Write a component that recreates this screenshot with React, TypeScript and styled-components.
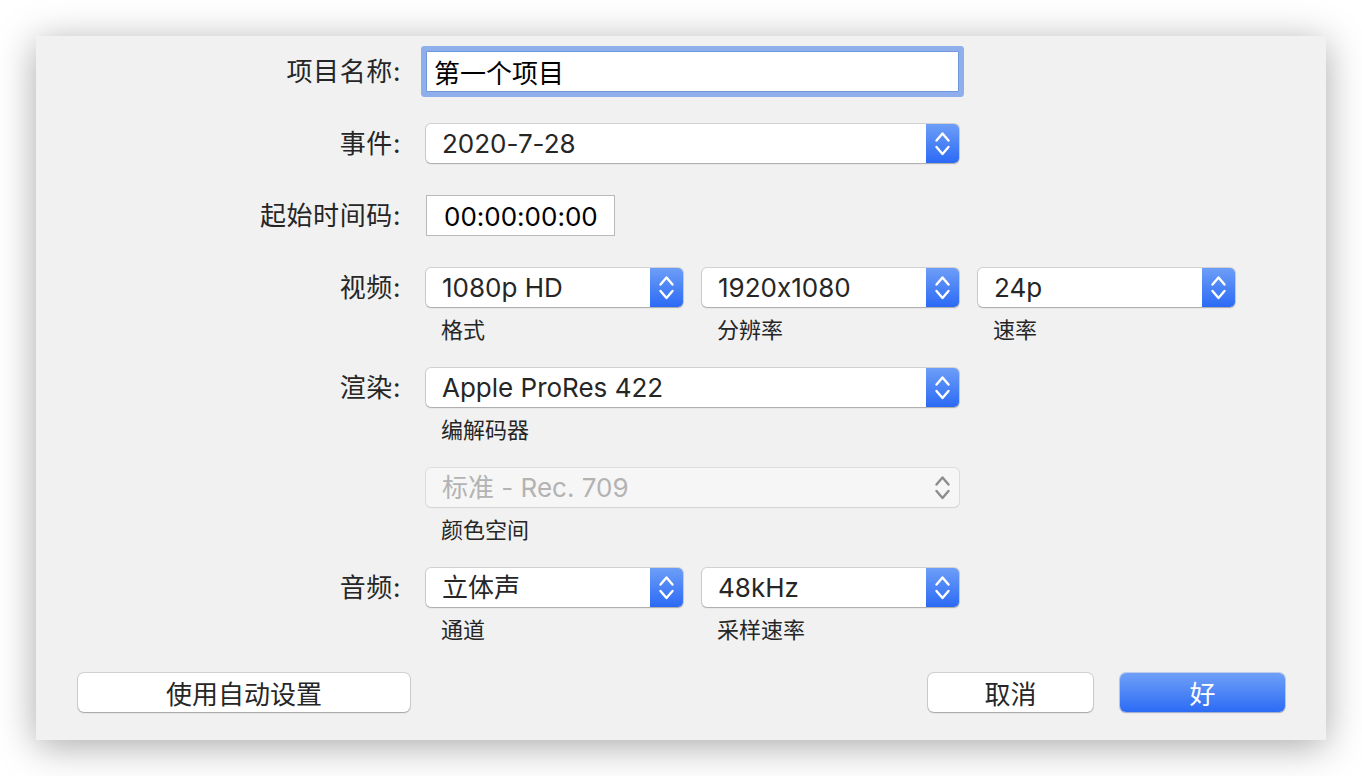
import React from "react";
import styled, { createGlobalStyle } from "styled-components";

const Global = createGlobalStyle`
  html, body { margin: 0; padding: 0; background: #ffffff; }
  body {
    font-family: Inter, "Noto Sans CJK SC", sans-serif;
    font-feature-settings: "calt" 0;
    -webkit-font-smoothing: antialiased;
  }
  * { box-sizing: border-box; }
`;

const Page = styled.div`
  width: 1362px;
  height: 776px;
  padding: 36px;
`;

const Dialog = styled.div`
  width: 1290px;
  height: 704px;
  background: #f1f1f1;
  box-shadow: 0 6px 36px rgba(0, 0, 0, 0.34);
  padding: 0 41px 28px 42px;
  display: flex;
  flex-direction: column;
`;

const Row = styled.div<{ $top: number }>`
  display: flex;
  align-items: flex-start;
  margin-top: ${(p) => p.$top}px;
`;

const Label = styled.div<{ $h: number; $shift?: number }>`
  width: 323px;
  height: ${(p) => p.$h}px;
  margin-right: 25px;
  flex-shrink: 0;
  text-align: right;
  font-size: 26px;
  line-height: ${(p) => p.$h}px;
  padding-top: ${(p) => p.$shift ?? 0}px;
  color: #262626;
  white-space: nowrap;
  letter-spacing: 0.6px;
`;

const Controls = styled.div`
  display: flex;
  gap: 19px;
`;

const Field = styled.div<{ $w: number }>`
  width: ${(p) => p.$w}px;
  display: flex;
  flex-direction: column;
`;

const Sub = styled.div`
  font-size: 22px;
  line-height: 26px;
  margin-top: 10px;
  padding-left: 15px;
  color: #262626;
`;

const NameInput = styled.input`
  width: 533px;
  height: 41px;
  border: 1px solid #7096dc;
  border-radius: 1px;
  box-shadow: 0 0 0 5px #8eaeec;
  background: #ffffff;
  font-family: inherit;
  font-size: 26px;
  color: #000000;
  padding: 0 0 0 7px;
  outline: none;
  margin: 0;
`;

const Timecode = styled.div`
  width: 189px;
  height: 41px;
  border: 1px solid #b9b9b9;
  background: #ffffff;
  font-size: 26px;
  line-height: 37px;
  color: #000000;
  padding: 2px 0 0 17px;
`;

const Popup = styled.div<{ $disabled?: boolean }>`
  height: 39px;
  display: flex;
  align-items: stretch;
  border-radius: 5px;
  overflow: hidden;
  background: ${(p) => (p.$disabled ? "#f6f6f6" : "#ffffff")};
  box-shadow: 0 0 0 1px
      ${(p) => (p.$disabled ? "rgba(0,0,0,0.08)" : "rgba(0,0,0,0.13)")},
    0 1px 1.5px ${(p) => (p.$disabled ? "rgba(0,0,0,0.05)" : "rgba(0,0,0,0.2)")};
`;

const PopupText = styled.div<{ $disabled?: boolean }>`
  flex: 1;
  padding: 1px 0 0 16px;
  font-size: 26px;
  line-height: 38px;
  color: ${(p) => (p.$disabled ? "#b3b3b3" : "#262626")};
  white-space: nowrap;
`;

const Stepper = styled.div<{ $disabled?: boolean }>`
  width: 33px;
  display: flex;
  align-items: center;
  justify-content: center;
  background: ${(p) =>
    p.$disabled ? "transparent" : "linear-gradient(#6d9ef7, #2b6af5)"};
  color: ${(p) => (p.$disabled ? "#8d8d8d" : "#ffffff")};
`;

const ButtonRow = styled.div`
  display: flex;
  justify-content: space-between;
  margin-top: 30px;
`;

const ButtonGroup = styled.div`
  display: flex;
  gap: 27px;
`;

const Button = styled.div<{ $w: number; $primary?: boolean }>`
  width: ${(p) => p.$w}px;
  height: 39px;
  border-radius: 6px;
  display: flex;
  align-items: center;
  justify-content: center;
  font-size: 26px;
  color: ${(p) => (p.$primary ? "#ffffff" : "#262626")};
  background: ${(p) =>
    p.$primary ? "linear-gradient(#6fa0f7, #2c6bf5)" : "#ffffff"};
  box-shadow: ${(p) =>
    p.$primary
      ? "0 0 0 1px rgba(40,90,220,0.25), 0 1px 1.5px rgba(0,0,0,0.2)"
      : "0 0 0 1px rgba(0,0,0,0.13), 0 1px 1.5px rgba(0,0,0,0.22)"};
`;

const Chevrons = () => (
  <svg width="33" height="39" viewBox="0 0 33 39" fill="none">
    <path
      d="M10.5 16.5 L16.5 9.5 L22.5 16.5"
      stroke="currentColor"
      strokeWidth="2.4"
      strokeLinecap="round"
      strokeLinejoin="round"
    />
    <path
      d="M10.5 23 L16.5 30 L22.5 23"
      stroke="currentColor"
      strokeWidth="2.4"
      strokeLinecap="round"
      strokeLinejoin="round"
    />
  </svg>
);

const Select = ({ value, disabled }: { value: string; disabled?: boolean }) => (
  <Popup $disabled={disabled}>
    <PopupText $disabled={disabled}>{value}</PopupText>
    <Stepper $disabled={disabled}>
      <Chevrons />
    </Stepper>
  </Popup>
);

export default function App() {
  return (
    <>
      <Global />
      <Page>
        <Dialog>
          <Row $top={15}>
            <Label $h={41}>项目名称:</Label>
            <NameInput readOnly value="第一个项目" />
          </Row>
          <Row $top={32}>
            <Label $h={39}>事件:</Label>
            <Field $w={533}>
              <Select value="2020-7-28" />
            </Field>
          </Row>
          <Row $top={32}>
            <Label $h={41}>起始时间码:</Label>
            <Timecode>00:00:00:00</Timecode>
          </Row>
          <Row $top={32}>
            <Label $h={39}>视频:</Label>
            <Controls>
              <Field $w={257}>
                <Select value="1080p HD" />
                <Sub>格式</Sub>
              </Field>
              <Field $w={257}>
                <Select value="1920x1080" />
                <Sub>分辨率</Sub>
              </Field>
              <Field $w={257}>
                <Select value="24p" />
                <Sub>速率</Sub>
              </Field>
            </Controls>
          </Row>
          <Row $top={25}>
            <Label $h={39}>渲染:</Label>
            <Field $w={533}>
              <Select value="Apple ProRes 422" />
              <Sub>编解码器</Sub>
            </Field>
          </Row>
          <Row $top={25}>
            <Label $h={39}></Label>
            <Field $w={533}>
              <Select value="标准 - Rec. 709" disabled />
              <Sub>颜色空间</Sub>
            </Field>
          </Row>
          <Row $top={25}>
            <Label $h={39}>音频:</Label>
            <Controls>
              <Field $w={257}>
                <Select value="立体声" />
                <Sub>通道</Sub>
              </Field>
              <Field $w={257}>
                <Select value="48kHz" />
                <Sub>采样速率</Sub>
              </Field>
            </Controls>
          </Row>
          <ButtonRow>
            <Button $w={332}>使用自动设置</Button>
            <ButtonGroup>
              <Button $w={165}>取消</Button>
              <Button $w={165} $primary>
                好
              </Button>
            </ButtonGroup>
          </ButtonRow>
        </Dialog>
      </Page>
    </>
  );
}
